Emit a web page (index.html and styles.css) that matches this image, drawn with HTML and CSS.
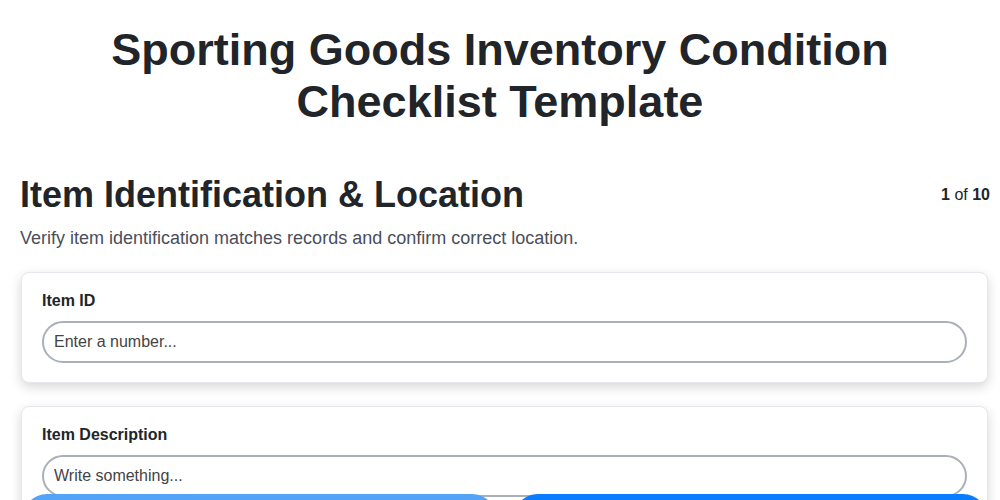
FILE: index.html
```
<!DOCTYPE html>
<html lang="en">
<head>
    <meta charset="UTF-8">
    <meta name="viewport" content="width=device-width, initial-scale=1.0">
    <title>Sporting Goods Inventory Condition Checklist Template</title>
    <link rel="stylesheet" href="styles.css">
</head>
<body>
    <div class="container">
        <h1>Sporting Goods Inventory Condition Checklist Template</h1>

        <div class="section-header">
            <h2>Item Identification &amp; Location</h2>
            <div class="step-count"><b>1</b> of <b>10</b></div>
        </div>
        <p class="section-desc">Verify item identification matches records and confirm correct location.</p>

        <div class="card">
            <label for="itemId">Item ID</label>
            <input type="number" id="itemId" placeholder="Enter a number...">
        </div>

        <div class="card">
            <label for="itemDesc">Item Description</label>
            <input type="text" id="itemDesc" placeholder="Write something...">
        </div>

        <div class="card">
            <label for="itemLocation">Storage Location</label>
            <input type="text" id="itemLocation" placeholder="Write something...">
        </div>
    </div>

    <div class="nav-buttons">
        <button class="btn btn-prev" disabled>Previous</button>
        <button class="btn btn-next">Next</button>
    </div>
</body>
</html>
```

FILE: styles.css
```
body {
    font-family: "Liberation Sans", Arial, sans-serif;
    margin: 0;
    background-color: #fff;
    color: #212529;
}
.container {
    padding: 24px 12px 80px 21px;
}
h1 {
    text-align: center;
    font-size: 45px;
    line-height: 52px;
    margin: 0 -12px 46px -21px;
    padding: 0 60px;
    color: #212529;
}
.section-header {
    display: flex;
    justify-content: space-between;
    align-items: flex-start;
}
h2 {
    font-size: 36px;
    margin: 0 0 0 -1px;
    line-height: 42px;
}
.step-count {
    font-size: 16px;
    margin-top: 12px;
    margin-right: -2px;
}
.section-desc {
    font-size: 18px;
    color: #4a4e5a;
    margin: 12px 0 23px -1px;
}
.card {
    background-color: #fff;
    border: 1px solid #e6e6ec;
    border-radius: 8px;
    padding: 19px 20px 19px 20px;
    margin-bottom: 23px;
    box-shadow: 0 4px 12px rgba(0,0,0,0.16);
}
.card label {
    display: block;
    font-weight: bold;
    font-size: 16px;
    margin-bottom: 11px;
}
.card input {
    display: block;
    width: 100%;
    box-sizing: border-box;
    height: 42px;
    padding: 0 10px;
    font-family: inherit;
    font-size: 16px;
    border: 2px solid #a9b0b8;
    border-radius: 21px;
    color: #333;
    background: #fff;
}
.card input::placeholder {
    color: #444;
}
.nav-buttons {
    position: fixed;
    left: 22px;
    right: 12px;
    bottom: -44px;
    display: flex;
    gap: 16px;
}
.btn {
    flex: 1;
    height: 50px;
    border: none;
    border-radius: 25px;
    background-color: #0a7cff;
    color: white;
    font-size: 16px;
    font-family: inherit;
    cursor: pointer;
}
.btn-prev {
    background-color: #53a4f8;
}
```
